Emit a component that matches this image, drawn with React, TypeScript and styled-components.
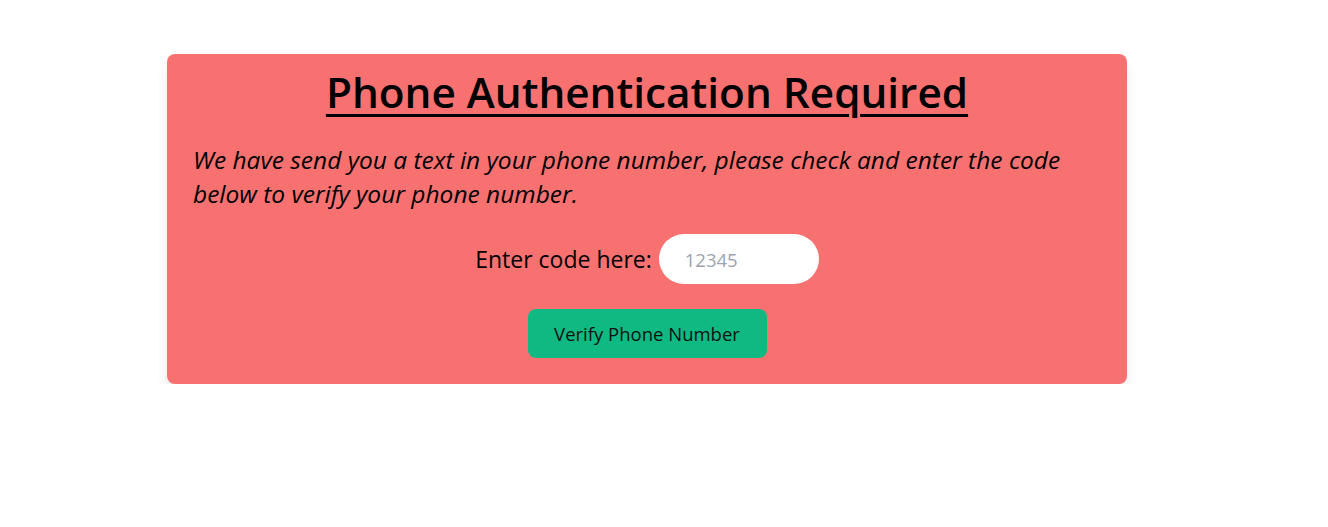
import React from 'react'
import styled, {createGlobalStyle} from 'styled-components'

const GlobalStyle = createGlobalStyle`
  body {
    margin: 0;
    background: #fff;
    font-family: "Open Sans", "Noto Sans", sans-serif;
    color: #000;
  }
`;

const Page = styled.div`
  padding: 54px 0 0 167px;
`;

const Card = styled.div`
  width: 960px;
  box-sizing: border-box;
  background: #f87171;
  border-radius: 8px;
  box-shadow: 0 10px 15px -3px rgba(0, 0, 0, 0.12), 0 4px 6px -4px rgba(0, 0, 0, 0.12);
  padding: 10px 26px 26px;
  display: flex;
  flex-direction: column;
  align-items: center;
`;

const Title = styled.h1`
  margin: 0;
  font-size: 42.3px;
  font-weight: 600;
  line-height: 56px;
  text-decoration: underline;
  text-underline-offset: 6px;
  text-decoration-thickness: 3px;
`;

const Message = styled.p`
  align-self: stretch;
  margin: 23px 0 0;
  font-size: 24.5px;
  font-style: italic;
  line-height: 34px;
`;

const CodeRow = styled.div`
  margin-top: 23px;
  display: flex;
  align-items: center;
  gap: 7px;
`;

const Label = styled.label`
  font-size: 23px;
`;

const CodeInput = styled.input`
  width: 160px;
  height: 50px;
  box-sizing: border-box;
  border: none;
  border-radius: 9999px;
  padding: 0 26px;
  font-family: inherit;
  font-size: 18.5px;
  outline: none;
  &::placeholder {
    color: #9ca3af;
  }
`;

const VerifyButton = styled.button`
  margin-top: 25px;
  width: 239px;
  height: 49px;
  border: none;
  border-radius: 8px;
  background: #10b981;
  color: #111;
  font-family: inherit;
  font-size: 18.5px;
  cursor: pointer;
`;

export default function App() {
  return (
    <>
      <GlobalStyle/>
      <Page>
        <Card>
          <Title>Phone Authentication Required</Title>
          <Message>
            We have send you a text in your phone number, please check and enter the code below to verify your phone number.
          </Message>
          <CodeRow>
            <Label htmlFor='code'>Enter code here:</Label>
            <CodeInput id='code' type='text' placeholder='12345'/>
          </CodeRow>
          <VerifyButton type='button'>Verify Phone Number</VerifyButton>
        </Card>
      </Page>
    </>
  );
}
